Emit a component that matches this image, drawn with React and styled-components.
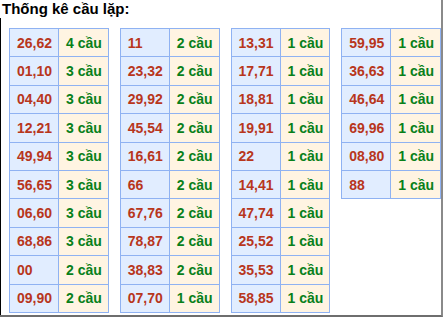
import React from 'react';
import styled, { createGlobalStyle } from 'styled-components';

const GlobalStyle = createGlobalStyle`
  html, body {
    margin: 0;
    padding: 0;
    background: #fff;
  }
  body {
    font-family: "Liberation Sans", Arial, sans-serif;
  }
`;

const columns = [
  [
    ['26,62', 4], ['01,10', 3], ['04,40', 3], ['12,21', 3], ['49,94', 3],
    ['56,65', 3], ['06,60', 3], ['68,86', 3], ['00', 2], ['09,90', 2],
  ],
  [
    ['11', 2], ['23,32', 2], ['29,92', 2], ['45,54', 2], ['16,61', 2],
    ['66', 2], ['67,76', 2], ['78,87', 2], ['38,83', 2], ['07,70', 1],
  ],
  [
    ['13,31', 1], ['17,71', 1], ['18,81', 1], ['19,91', 1], ['22', 1],
    ['14,41', 1], ['47,74', 1], ['25,52', 1], ['35,53', 1], ['58,85', 1],
  ],
  [
    ['59,95', 1], ['36,63', 1], ['46,64', 1], ['69,96', 1], ['08,80', 1],
    ['88', 1],
  ],
];

const Frame = styled.div`
  width: 443px;
  height: 317px;
  box-sizing: border-box;
  border-right: 2px solid #8a8a8a;
  border-bottom: 2px solid #6e6e6e;
  display: flex;
  flex-direction: column;
`;

const Title = styled.div`
  font-weight: bold;
  font-size: 15px;
  color: #000;
  line-height: 18px;
  padding-left: 2px;
  height: 18px;
`;

const Body = styled.div`
  flex: 1;
  border-left: 1px solid #000;
  padding: 10px 0 0 8px;
  display: flex;
  align-items: flex-start;
  gap: 11px;
`;

const Table = styled.table`
  border-collapse: collapse;
  width: 100px;
  table-layout: fixed;
`;

const Cell = styled.td`
  height: 27.4px;
  padding: 0 0 0 7px;
  border: 1px solid #8fb2f2;
  font-size: 14px;
  font-weight: bold;
  white-space: nowrap;
  vertical-align: middle;
  background: ${(p) => (p.$count ? '#fff4e2' : '#e1edff')};
  color: ${(p) => (p.$count ? '#08801a' : '#b8361c')};
`;

const App = () => (
  <>
    <GlobalStyle />
    <Frame>
      <Title>Thống kê cầu lặp:</Title>
      <Body>
        {columns.map((rows, i) => (
          <Table key={i}>
            <colgroup>
              <col style={{ width: 49 }} />
              <col />
            </colgroup>
            <tbody>
              {rows.map(([pair, n]) => (
                <tr key={pair}>
                  <Cell>{pair}</Cell>
                  <Cell $count>{n} cầu</Cell>
                </tr>
              ))}
            </tbody>
          </Table>
        ))}
      </Body>
    </Frame>
  </>
);

export default App;
